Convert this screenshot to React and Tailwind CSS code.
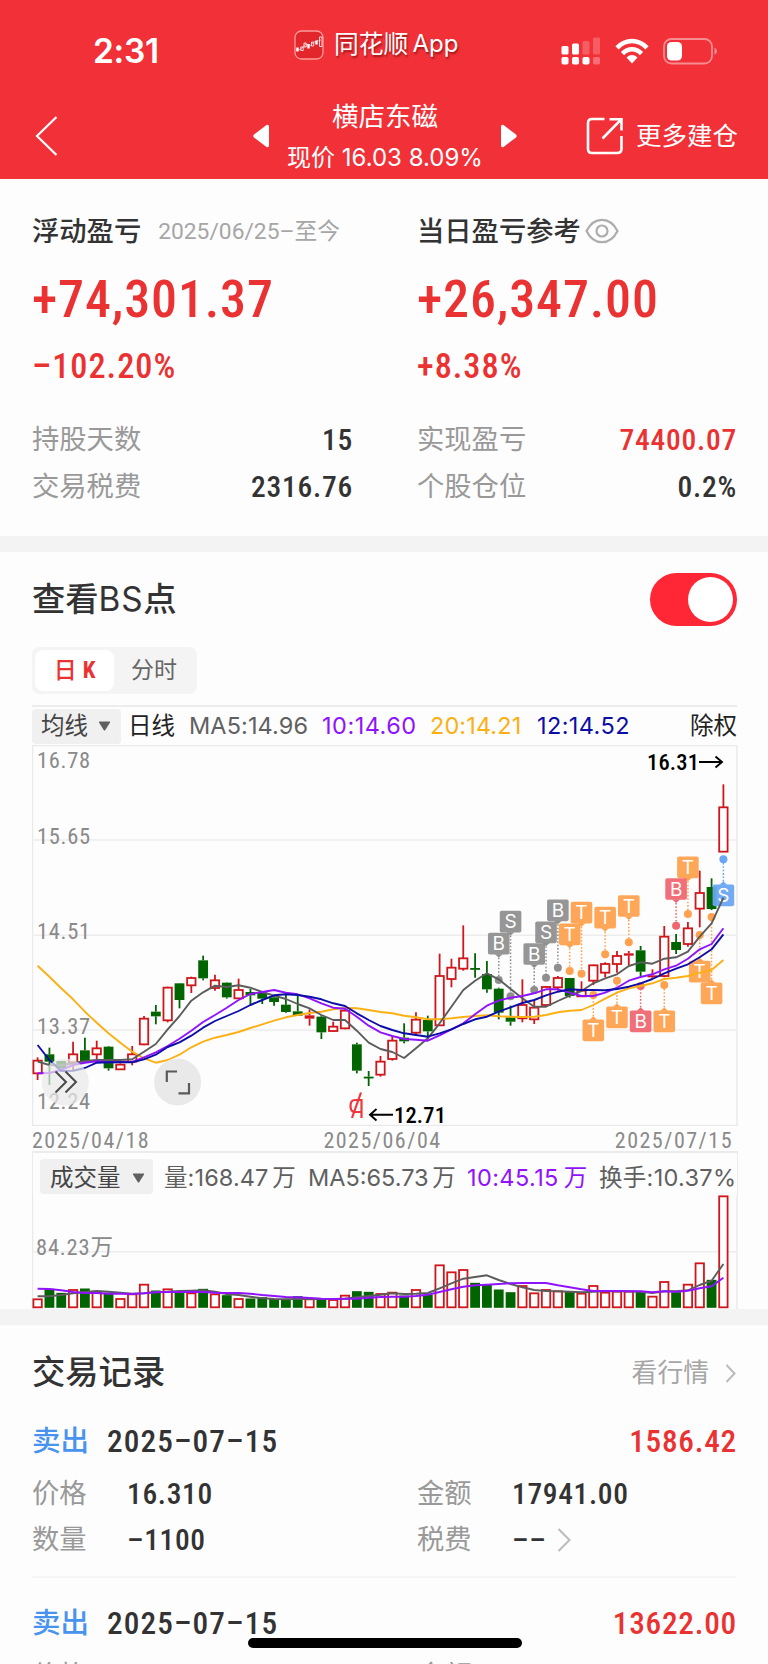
const STEP = 11.824;
const X0 = 5.6;
const cx = (i) => X0 + STEP * i;
// price and volume readings are kept in thirds of a pixel
const py = (v) => (v - 15) / 3;
const vy = (v) => v / 3 - 85;

// [up, high, bodyTop, bodyBottom, low, volumeTop]
const CANDLES = [
  [1, 952, 962, 1000, 1020, 568], [0, 923, 943, 965, 1035, 538], [0, 963, 963, 985, 990, 550],
  [1, 905, 943, 967, 990, 540], [0, 893, 931, 967, 967, 537], [1, 902, 925, 943, 960, 548],
  [0, 918, 920, 985, 992, 550], [1, 970, 974, 988, 988, 567], [1, 918, 943, 965, 976, 553],
  [1, 828, 836, 913, 916, 524], [0, 795, 815, 829, 853, 543], [1, 740, 743, 841, 847, 538],
  [0, 729, 730, 780, 805, 545], [1, 710, 714, 736, 759, 550], [0, 647, 661, 715, 721, 538],
  [1, 704, 721, 744, 752, 553], [0, 727, 728, 772, 776, 557], [1, 716, 750, 775, 775, 567],
  [0, 747, 756, 766, 795, 567], [0, 755, 758, 776, 792, 563], [0, 765, 772, 786, 797, 568],
  [0, 765, 794, 816, 818, 568], [0, 763, 814, 827, 828, 560], [1, 808, 826, 836, 857, 568],
  [0, 825, 830, 877, 897, 568], [1, 845, 860, 873, 875, 570], [1, 808, 812, 865, 868, 557],
  [0, 908, 913, 992, 1000, 545], [0, 993, 1010, 1014, 1038, 547], [1, 948, 965, 1004, 1010, 552],
  [1, 888, 902, 957, 962, 548], [0, 850, 893, 904, 910, 558], [1, 817, 839, 878, 888, 540],
  [0, 827, 840, 874, 898, 556], [1, 641, 708, 856, 858, 466], [1, 656, 683, 717, 742, 487],
  [1, 556, 655, 686, 692, 480], [0, 640, 684, 688, 713, 520], [0, 663, 702, 748, 758, 524],
  [0, 743, 746, 818, 838, 540], [0, 797, 832, 845, 857, 548], [1, 718, 795, 835, 847, 528],
  [1, 780, 803, 838, 852, 550], [1, 738, 741, 795, 800, 540], [1, 708, 714, 742, 752, 544],
  [0, 714, 714, 768, 773, 546], [1, 724, 752, 769, 771, 551], [1, 674, 676, 722, 735, 528],
  [1, 667, 672, 698, 712, 548], [1, 633, 648, 672, 698, 545], [1, 633, 640, 647, 676, 545],
  [0, 618, 631, 695, 708, 546], [1, 688, 706, 712, 715, 560], [1, 558, 590, 708, 712, 516],
  [0, 582, 606, 630, 642, 548], [1, 546, 565, 612, 620, 524], [1, 392, 459, 506, 562, 460],
  [0, 415, 441, 507, 510, 511], [1, 133, 202, 335, 335, 259],
];

const MA5 = [965, 975, 976, 970, 963, 960, 960, 960, 958, 935, 912, 868, 828, 782, 757, 737, 741, 736, 743, 756, 767, 777, 792, 805, 825, 840, 840, 872, 908, 927, 936, 954, 925, 895, 850, 800, 750, 722, 700, 718, 747, 775, 800, 800, 783, 767, 753, 730, 715, 703, 678, 667, 671, 656, 652, 635, 590, 550, 473];
const MA10 = [1000, 999, 990, 975, 968, 964, 967, 966, 966, 952, 937, 918, 896, 872, 846, 825, 803, 780, 762, 756, 750, 758, 763, 775, 790, 803, 806, 830, 857, 877, 888, 897, 899, 902, 886, 868, 850, 823, 797, 782, 773, 768, 760, 748, 748, 758, 768, 768, 758, 743, 722, 711, 703, 688, 677, 656, 628, 612, 565];
const MA12 = [915, 960, 993, 992, 984, 968, 967, 967, 967, 958, 944, 921, 907, 887, 863, 843, 828, 813, 795, 780, 766, 763, 765, 770, 778, 790, 798, 820, 840, 858, 870, 880, 885, 890, 880, 868, 852, 838, 830, 815, 802, 789, 780, 766, 755, 748, 750, 750, 751, 747, 740, 730, 717, 700, 686, 673, 652, 628, 583];
const MA20 = [677, 710, 745, 778, 815, 848, 880, 908, 935, 955, 968, 960, 944, 922, 905, 893, 885, 876, 864, 853, 842, 832, 825, 819, 815, 808, 804, 805, 810, 816, 820, 827, 832, 838, 838, 835, 831, 828, 826, 829, 830, 831, 830, 825, 817, 812, 810, 795, 776, 758, 745, 738, 730, 717, 713, 708, 698, 690, 660];
const VOL5 = [559, 559, 555, 550, 546, 543, 545, 548, 551, 550, 546, 545, 543, 542, 541, 545, 552, 555, 560, 565, 567, 568, 567, 566, 567, 567, 566, 562, 558, 554, 550, 552, 551, 549, 535, 520, 506, 501, 496, 510, 522, 532, 540, 543, 544, 545, 547, 545, 544, 544, 544, 545, 549, 544, 544, 541, 525, 512, 462];
const VOL10 = [536, 537, 541, 546, 549, 549, 551, 551, 552, 550, 547, 546, 546, 545, 546, 548, 549, 549, 551, 555, 558, 561, 562, 564, 566, 567, 566, 566, 563, 561, 560, 560, 558, 554, 546, 538, 530, 526, 524, 522, 520, 519, 519, 519, 526, 532, 538, 543, 543, 543, 544, 544, 547, 544, 545, 542, 535, 529, 503];

const GRAY = '#8f8f8f';
const ORANGE = '#ffa14e';
const RED = '#ef6670';
const BLUE = '#69a6f3';

// [label, colour, candle index, box centre, dot centre]
const MARKERS = [
  ['S', GRAY, 40, 545, 769], ['B', GRAY, 39, 611, 720], ['B', GRAY, 42, 642, 750],
  ['B', GRAY, 44, 511, 683], ['S', GRAY, 43, 577, 713], ['T', ORANGE, 46, 518, 701],
  ['T', ORANGE, 45, 583, 693], ['T', ORANGE, 48, 533, 643], ['T', ORANGE, 50, 498, 607],
  ['T', ORANGE, 47, 871, 765], ['T', ORANGE, 49, 832, 722], ['B', RED, 51, 844, 738],
  ['T', ORANGE, 53, 844, 735], ['T', ORANGE, 55, 382, 522], ['B', RED, 54, 447, 557],
  ['T', ORANGE, 56, 695, 585], ['T', ORANGE, 57, 760, 531], ['S', BLUE, 58, 466, 358],
];

function Line({ data, y, color }) {
  return (
    <polyline
      points={data.map((v, i) => `${cx(i).toFixed(1)},${y(v).toFixed(1)}`).join(' ')}
      fill="none"
      stroke={color}
      strokeWidth="1.9"
      strokeLinejoin="round"
    />
  );
}

function Candle({ i, row }) {
  const [up, high, top, bottom, low] = row;
  const x = cx(i);
  const color = up ? '#d0161b' : '#006400';
  const h = py(bottom) - py(top);
  return (
    <g stroke={color} strokeWidth="1.8">
      <line x1={x} x2={x} y1={py(high)} y2={py(top)} />
      <line x1={x} x2={x} y1={py(bottom)} y2={py(low)} />
      {up && h > 4 ? (
        <rect x={x - 4.2} y={py(top)} width="8.4" height={h} fill="#fdfdfd" />
      ) : (
        <rect x={x - 4.9} y={py(top)} width="9.8" height={Math.max(h, 1.8)} fill={color} stroke="none" />
      )}
    </g>
  );
}

function Marker({ label, color, i, box, dot }) {
  const x = cx(i);
  const by = py(box);
  const dy = py(dot);
  const dir = dy > by ? 1 : -1;
  const edge = by + dir * 10.5;
  return (
    <g>
      <line x1={x} x2={x} y1={edge} y2={dy} stroke={color} strokeWidth="1.5" strokeDasharray="1.6 1.8" />
      <circle cx={x} cy={dy} r="4" fill={color} />
      <path d={`M${x - 4} ${edge}L${x} ${edge + dir * 3.4}L${x + 4} ${edge}Z`} fill={color} />
      <rect x={x - 10.8} y={by - 10.8} width="21.6" height="21.6" rx="1.8" fill={color} fillOpacity="0.94" />
      <text x={x} y={by + 6.8} textAnchor="middle" fontSize="19" fill="#fff" className="font-['Inter']">
        {label}
      </text>
    </g>
  );
}

const PRICE_LABELS = [['16.78', 15], ['15.65', 90.5], ['14.51', 185.5], ['13.37', 280.5], ['12.24', 356]];

function PriceChart() {
  return (
    <svg width="706" height="381" viewBox="0 0 706 381" className="block font-['Roboto'] [font-stretch:75%]">
      <rect x="0.5" y="0.5" width="704.5" height="380" fill="none" stroke="#e9e9e9" strokeWidth="1.4" />
      {[95, 190.3, 285].map((y) => (
        <line key={y} x1="0" x2="705" y1={y} y2={y} stroke="#ededed" strokeWidth="1.4" />
      ))}
      {PRICE_LABELS.map(([t, y]) => (
        <text key={t} x="5" y={y + 8} fontSize="22.5" fill="#8a8a8a" textLength="53">{t}</text>
      ))}
      {CANDLES.map((row, i) => <Candle key={i} i={i} row={row} />)}
      {MARKERS.map(([label, color, i, box, dot]) => (
        <Marker key={i} label={label} color={color} i={i} box={box} dot={dot} />
      ))}
      <Line data={MA20} y={py} color="#fbb014" />
      <Line data={MA5} y={py} color="#5c5c5c" />
      <Line data={MA10} y={py} color="#9013fe" />
      <Line data={MA12} y={py} color="#0d0da8" />

      <text x="615" y="25.2" fontSize="22.5" fontWeight="500" fill="#000" textLength="52">16.31</text>
      <path d="M667 17H690M683.5 11.5L690 17L683.5 22.5" fill="none" stroke="#000" strokeWidth="1.9" />
      <text x="362" y="377.5" fontSize="22.5" fontWeight="500" fill="#000" textLength="52">12.71</text>
      <path d="M361 369.7H338M344.5 364L338 369.7L344.5 375.5" fill="none" stroke="#000" strokeWidth="1.9" />
      <g fill="none" stroke="#f0383c" strokeWidth="2.2">
        <path d="M329.5 373V355H323Q318.5 355 318.5 361Q318.5 367 323 367H329.5" />
        <path d="M329 347.5L320 373" />
      </g>

      <circle cx="33.3" cy="337" r="23.5" fill="#e9e9e9" fillOpacity="0.72" />
      <path d="M23.5 326.5L34 337L23.5 347.5M33.5 326.5L44 337L33.5 347.5" fill="none" stroke="#4a4a4a" strokeWidth="2" />
      <circle cx="145.6" cy="337" r="23.5" fill="#e9e9e9" />
      <path d="M134.8 337V326.5H145M146.5 348.3H157V338" fill="none" stroke="#5a5a5a" strokeWidth="2.2" />
    </svg>
  );
}

function VolumeChart() {
  return (
    <svg width="706" height="114" viewBox="0 0 706 114" className="block font-['Roboto','Noto_Sans_CJK_SC'] [font-stretch:75%]">
      <path d="M0.5 0V114M705 0V114" stroke="#e9e9e9" strokeWidth="1.4" />
      <line x1="0" x2="705" y1="56.7" y2="56.7" stroke="#ededed" strokeWidth="1.4" />
      <text x="4" y="60" fontSize="22.5" fill="#8a8a8a" textLength="77">84.23万</text>
      {CANDLES.map(([up, , , , , v], i) =>
        up ? (
          <rect key={i} x={cx(i) - 4.2} y={vy(v)} width="8.4" height={112.3 - vy(v)} fill="#fdfdfd" stroke="#d0161b" strokeWidth="1.8" />
        ) : (
          <rect key={i} x={cx(i) - 4.9} y={vy(v) - 0.5} width="9.8" height={113.3 - vy(v)} fill="#006400" />
        ),
      )}
      <Line data={VOL5} y={vy} color="#5c5c5c" />
      <Line data={VOL10} y={vy} color="#9013fe" />
    </svg>
  );
}

function Chevron({ w, h, className, sw = 2 }) {
  return (
    <svg width={w} height={h} viewBox={`0 0 ${w} ${h}`} className={className} fill="none" stroke="currentColor" strokeWidth={sw}>
      <path d={`M1.5 1L${w - 1.5} ${h / 2}L1.5 ${h - 1}`} />
    </svg>
  );
}

function Caret() {
  return (
    <svg width="13" height="10" viewBox="0 0 13 10" fill="#606060">
      <path d="M1.5 0.5H11.5Q12.5 0.5 12 1.5L7.3 9Q6.5 10 5.7 9L1 1.5Q0.5 0.5 1.5 0.5Z" />
    </svg>
  );
}

function StatusBar() {
  return (
    <div className="flex h-[102px] items-center">
      <div className="w-[294px] pl-[93px] pt-[1px] font-['Inter'] text-[33.5px] font-semibold tracking-[-0.3px]">2:31</div>
      <div className="mb-[12px] flex items-center gap-[10px]">
        <svg width="30" height="30" viewBox="0 0 30 30" fill="none">
          <rect x="1" y="1" width="28" height="28" rx="6.5" fill="#e3262c" stroke="#ff9c9c" strokeWidth="1.3" />
          <path d="M2 19.5H7M7 19L12 14L16 16L20 12L27 10" stroke="#fff" strokeWidth="1" strokeOpacity="0.5" />
          <path d="M3.5 17.5V21.5M14.5 14V18.5M22.5 10.5V14.5" stroke="#fff" strokeWidth="2.4" />
          <path d="M6.8 17H9.2V20.5H6.8ZM10 13H12.2V17H10ZM17.5 12H19.7V16H17.5ZM25.5 7H28V16.5H25.5Z" stroke="#fff" strokeWidth="1" strokeOpacity="0.8" />
        </svg>
        <span className="flex gap-[4px] font-['Inter','Noto_Sans_CJK_SC'] text-[24.8px] [text-shadow:1px_2px_2px_rgba(90,0,0,0.55)]">
          <span>同花顺</span>
          <span className="text-[24px]">App</span>
        </span>
      </div>
      <div className="ml-auto flex items-center pr-[50px]">
        <svg width="40" height="28" viewBox="0 0 40 28" fill="#fff">
          <rect x="0.5" y="9" width="7" height="8.5" rx="1.5" />
          <rect x="11" y="6.5" width="7" height="11" rx="1.5" />
          <rect x="21.5" y="4" width="7" height="13.5" rx="1.5" opacity="0.22" />
          <rect x="32" y="0.5" width="7" height="17" rx="1.5" opacity="0.22" />
          <rect x="0.5" y="20" width="7" height="7.5" rx="1.8" />
          <rect x="11" y="20" width="7" height="7.5" rx="1.8" />
          <rect x="21.5" y="20" width="7" height="7.5" rx="1.8" />
          <rect x="32" y="20" width="7" height="7.5" rx="1.8" opacity="0.3" />
        </svg>
        <svg width="34" height="26" viewBox="0 0 34 26" fill="none" stroke="#fff" strokeWidth="4.6" className="ml-[14px]">
          <path d="M2 9.8Q8.5 3 17 3Q25.5 3 32 9.8" />
          <path d="M7.5 15.6Q11.8 11.3 17 11.3Q22.2 11.3 26.5 15.6" />
          <path d="M11.5 19.4Q17 14.8 22.5 19.4L17 25.5Z" fill="#fff" stroke="none" />
        </svg>
        <svg width="55" height="27" viewBox="0 0 55 27" fill="none" className="ml-[14px]">
          <rect x="1" y="1" width="48" height="24.5" rx="7.5" stroke="#fff" strokeOpacity="0.45" strokeWidth="1.8" />
          <rect x="4" y="4" width="15" height="18.5" rx="4.5" fill="#fff" />
          <path d="M51.5 9.5Q54 11 54 13.3Q54 15.5 51.5 17Z" fill="#fff" fillOpacity="0.45" />
        </svg>
      </div>
    </div>
  );
}

function NavBar() {
  return (
    <div className="flex h-[77px] items-center pb-[9px]">
      <svg width="24" height="40" viewBox="0 0 24 40" fill="none" stroke="#fff" strokeWidth="2.2" className="ml-[35px]">
        <path d="M21.5 1L2 20L21.5 39" />
      </svg>
      <svg width="16" height="24" viewBox="0 0 16 24" fill="#fff" className="ml-[194px]">
        <path d="M1 10.5L13.5 1Q16 0 16 3V21Q16 24 13.5 23L1 13.5Q-0.5 12 1 10.5Z" />
      </svg>
      <div className="flex w-[232px] flex-col items-center pt-[2px]">
        <div className="h-[41px] text-[26.5px] leading-[41px]">横店东磁</div>
        <div className="h-[41px] whitespace-nowrap font-['Inter','Noto_Sans_CJK_SC'] text-[24px] leading-[41px]">现价 16.03 8.09%</div>
      </div>
      <svg width="16" height="24" viewBox="0 0 16 24" fill="#fff">
        <path d="M15 10.5L2.5 1Q0 0 0 3V21Q0 24 2.5 23L15 13.5Q16.5 12 15 10.5Z" />
      </svg>
      <svg width="38" height="38" viewBox="0 0 38 38" fill="none" stroke="#fff" strokeWidth="2.6" className="ml-[69px]">
        <path d="M18.5 2H6Q2 2 2 6V32Q2 36 6 36H31Q35.5 36 35.5 32V19" />
        <path d="M23.5 2.2H35.5V13.5M35 2.7L16.5 21.5" />
      </svg>
      <span className="ml-[12px] text-[25.5px]">更多建仓</span>
    </div>
  );
}

function Stat({ label, value, red }) {
  return (
    <div className="flex h-[47px] items-center justify-between pt-[4px]">
      <span className="text-[27.3px] text-[#999]">{label}</span>
      <span className={`-mr-px text-[29.5px] font-medium tracking-[0.75px] [font-stretch:75%] ${red ? 'text-[#eb3232]' : 'text-[#333]'}`}>{value}</span>
    </div>
  );
}

function Summary({ title, extra, amount, percent, children }) {
  return (
    <div>
      <div className="flex h-[38px] items-center pt-[4px] text-[27.3px] font-medium text-[#333]">
        {title}
        {extra}
      </div>
      <div className="h-[99px] pt-px text-[52px] font-medium leading-[99px] tracking-[0.85px] text-[#eb3232] [font-stretch:75%]">{amount}</div>
      <div className="mb-[31px] h-[36px] text-[34.3px] font-medium leading-[36px] tracking-[1px] text-[#eb3232] [font-stretch:75%]">{percent}</div>
      {children}
    </div>
  );
}

function Field({ label, children }) {
  return (
    <div className="flex h-[46px] items-center pt-[2px]">
      <span className="w-[95px] text-[27.3px] text-[#999]">{label}</span>
      <span className="flex items-center text-[29.5px] font-medium tracking-[0.65px] text-[#333] [font-stretch:75%]">{children}</span>
    </div>
  );
}

function Trade({ date, profit, price, amount, count }) {
  return (
    <div className="border-b-2 border-[#f5f5f5] pb-[14px]">
      <div className="flex h-[60px] items-center pt-[4px]">
        <span className="text-[28.5px] font-medium text-[#4793ed]">卖出</span>
        <span className="ml-[18px] text-[31.3px] font-medium tracking-[1.1px] text-[#333] [font-stretch:75%]">{date}</span>
        <span className="-mr-px ml-auto text-[31.3px] font-medium tracking-[0.75px] text-[#eb3232] [font-stretch:75%]">{profit}</span>
      </div>
      <div className="grid grid-cols-[385px_1fr]">
        <Field label="价格">{price}</Field>
        <Field label="金额">{amount}</Field>
        <Field label="数量">{count}</Field>
        <Field label="税费">
          ––
          <Chevron w={14} h={24} className="ml-[11px] text-[#bbb]" />
        </Field>
      </div>
    </div>
  );
}

export default function App() {
  return (
    <div className="relative h-[1664px] w-[768px] overflow-hidden bg-[#fdfdfd] font-['Roboto','Noto_Sans_CJK_SC',sans-serif]">
      <header className="h-[179px] bg-[#f23038] text-white">
        <StatusBar />
        <NavBar />
      </header>

      <section className="grid h-[357px] grid-cols-[320px_319px] gap-x-[65px] pl-8 pt-8">
        <Summary
          title="浮动盈亏"
          extra={<span className="ml-[17px] text-[22.8px] font-normal text-[#a6a6a6]">2025/06/25–至今</span>}
          amount="+74,301.37"
          percent="–102.20%"
        >
          <Stat label="持股天数" value="15" />
          <Stat label="交易税费" value="2316.76" />
        </Summary>
        <Summary
          title="当日盈亏参考"
          extra={
            <svg width="34" height="26" viewBox="0 0 34 26" fill="none" stroke="#adadad" strokeWidth="2.2" className="mb-[3px] ml-[4px]">
              <path d="M1.5 13Q7 1.8 17 1.8Q27 1.8 32.5 13Q27 24.2 17 24.2Q7 24.2 1.5 13Z" />
              <circle cx="17" cy="13" r="5.5" />
            </svg>
          }
          amount="+26,347.00"
          percent="+8.38%"
        >
          <Stat label="实现盈亏" value="74400.07" red />
          <Stat label="个股仓位" value="0.2%" />
        </Summary>
      </section>

      <div className="h-4 bg-[#f3f3f3]" />

      <section className="pl-8">
        <div className="flex h-[94px] items-center justify-between pr-[31px]">
          <h2 className="pt-[2px] text-[33.3px] font-medium text-[#333]">
            查看<span className="font-['Inter'] font-normal tracking-[0.8px]">BS</span>点
          </h2>
          <div className="flex h-[53px] w-[87px] items-center justify-end rounded-full bg-[#ff2636] pr-[4px]">
            <div className="size-[45px] rounded-full bg-white" />
          </div>
        </div>

        <div className="mt-px flex h-[47px] w-[165px] items-center rounded-lg bg-[#f4f4f4] p-[3px] text-[23px]">
          <div className="flex h-[41px] w-[79px] items-center justify-center gap-[6px] rounded-lg bg-white pt-[2px] font-bold text-[#eb3232]">
            <span className="font-medium">日</span>
            <span className="[font-stretch:75%]">K</span>
          </div>
          <div className="flex-1 pt-[2px] text-center text-[#666]">分时</div>
        </div>

        <div className="mt-[11px] flex h-[40px] w-[705px] items-center border-t-2 border-[#ececec] font-['Inter','Noto_Sans_CJK_SC'] text-[23.5px]">
          <div className="flex h-[35px] w-[89px] items-center gap-[10px] rounded bg-[#f0f0f0] pl-[9px] text-[#444]">
            均线
            <Caret />
          </div>
          <span className="ml-[7px] w-[61px] text-[#222]">日线</span>
          <span className="w-[133px] tracking-[0.1px] text-[#606060]">MA5:14.96</span>
          <span className="w-[108px] tracking-[0.5px] text-[#9013fe]">10:14.60</span>
          <span className="w-[107px] tracking-[0.1px] text-[#fbb014]">20:14.21</span>
          <span className="tracking-[0.4px] text-[#0d0da8]">12:14.52</span>
          <span className="ml-auto text-[#222]">除权</span>
        </div>

        <PriceChart />

        <div className="flex h-[25px] w-[701px] items-center justify-between pt-[4px] text-[22px] tracking-[1.5px] text-[#8a8a8a] [font-stretch:75%]">
          <span>2025/04/18</span>
          <span>2025/06/04</span>
          <span>2025/07/15</span>
        </div>

        <div className="h-[158px] w-[706px]">
          <div className="h-[44px] w-[706px] border-x border-t-2 border-[#ebebeb] pt-[6px]">
            <div className="flex h-[35px] items-center whitespace-nowrap font-['Inter','Noto_Sans_CJK_SC'] text-[23.5px] text-[#606060]">
              <div className="ml-[7px] flex h-[35px] w-[113px] items-center gap-[11px] rounded bg-[#f0f0f0] pl-[10px] pt-[2px] text-[#444]">
                成交量
                <Caret />
              </div>
              <span className="ml-[11px] w-[144px] pt-[3px] tracking-[0.1px] [word-spacing:-3px]">量:168.47 万</span>
              <span className="w-[159px] pt-[3px] [word-spacing:-3px]">MA5:65.73 万</span>
              <span className="w-[132px] pt-[3px] tracking-[0.4px] text-[#9013fe] [word-spacing:-2px]">10:45.15 万</span>
              <span className="pt-[3px] tracking-[0.3px]">换手:10.37%</span>
            </div>
          </div>
          <VolumeChart />
        </div>
      </section>

      <div className="h-4 bg-[#f3f3f3]" />

      <section className="pl-8 pr-[32px]">
        <div className="flex h-[85px] items-center justify-between pt-[11px]">
          <h2 className="text-[33.3px] font-medium text-[#333]">交易记录</h2>
          <div className="flex items-center text-[25.8px] text-[#a6a6a6]">
            看行情
            <Chevron w={11} h={19} className="ml-[16px] text-[#bbb]" />
          </div>
        </div>
        <Trade date="2025–07–15" profit="1586.42" price="16.310" amount="17941.00" count="–1100" />
        <div className="h-[14px]" />
        <Trade date="2025–07–15" profit="13622.00" price="16.250" amount="112700.00" count="–6900" />
      </section>

      <div className="absolute left-[248px] top-[1638px] h-[10px] w-[274px] rounded-full bg-black" />
    </div>
  );
}
